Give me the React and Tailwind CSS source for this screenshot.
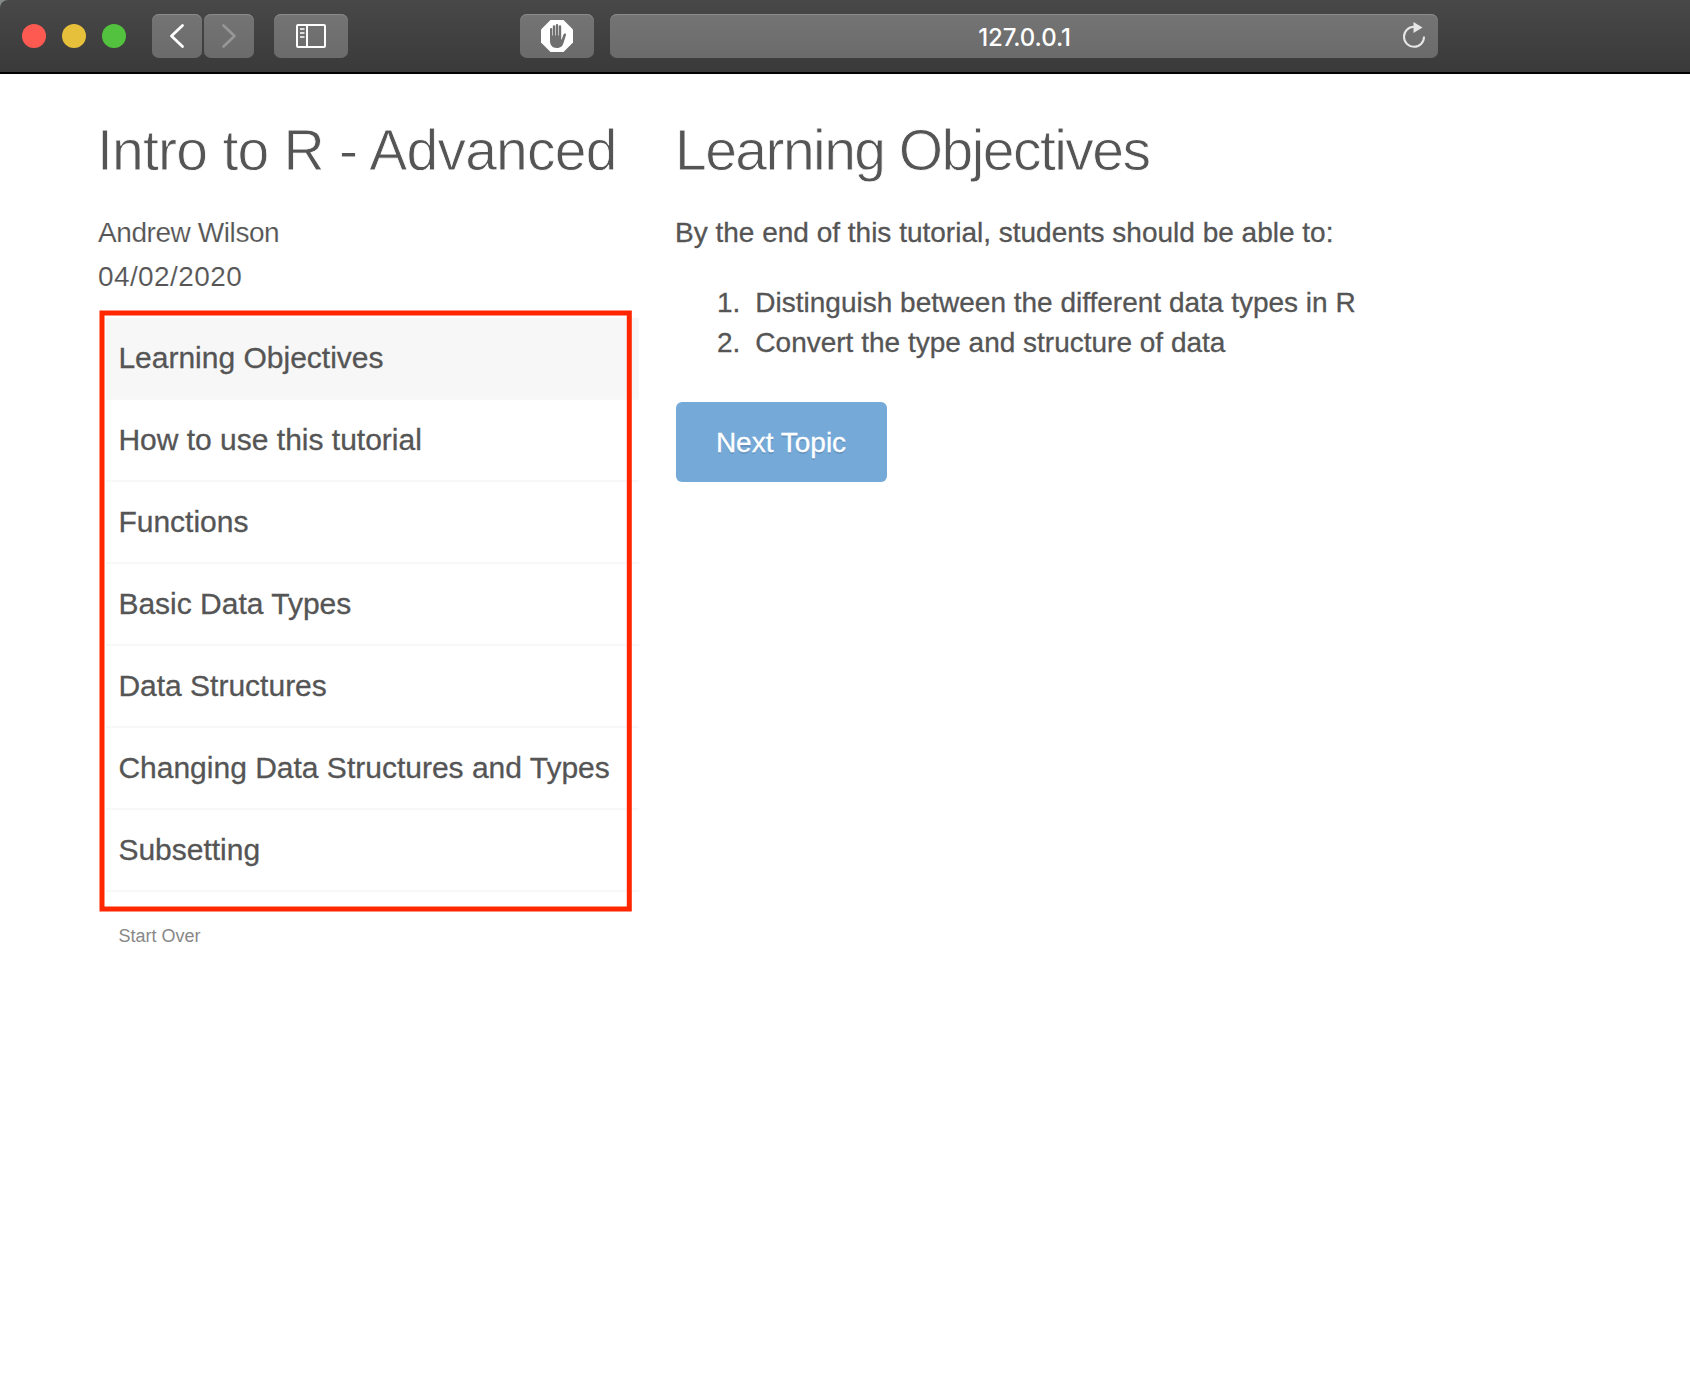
const topics = [
  'Learning Objectives',
  'How to use this tutorial',
  'Functions',
  'Basic Data Types',
  'Data Structures',
  'Changing Data Structures and Types',
  'Subsetting',
];

const objectives = [
  'Distinguish between the different data types in R',
  'Convert the type and structure of data',
];

const control =
  'flex items-center justify-center h-11 rounded-[7px] bg-gradient-to-b from-[#747474] to-[#6b6b6b] shadow-[inset_0_1px_0_#8a8a8a]';

function Toolbar() {
  return (
    <div className="flex-none bg-[#858a8a]">
      <header className="flex h-[74px] items-start rounded-tl-[8px] border-b-2 border-black bg-gradient-to-b from-[#484848] to-[#3a3a3a] pl-[22px] pt-3.5">
        <div className="flex h-11 items-center gap-4">
          <span className="size-6 rounded-full bg-[#ff5a52]" />
          <span className="size-6 rounded-full bg-[#e6c03b]" />
          <span className="size-6 rounded-full bg-[#53c33f]" />
        </div>
        <div className="ml-[26px] flex gap-0.5">
          <button className={control + ' w-[50px]'}>
            <svg width="50" height="44" fill="none" stroke="#fff" strokeWidth="2.8" strokeLinecap="round" strokeLinejoin="round">
              <path d="M30.5 11.5 19.5 22l11 10.5" />
            </svg>
          </button>
          <button className={control + ' w-[50px]'}>
            <svg width="50" height="44" fill="none" stroke="#979797" strokeWidth="2.6" strokeLinecap="round" strokeLinejoin="round">
              <path d="M19.500 11.500 30.500 22l-11 10.500" />
            </svg>
          </button>
        </div>
        <button className={control + ' ml-5 w-[74px]'}>
          <svg width="74" height="44" fill="none">
            <rect x="23" y="11" width="28" height="22" rx="1" stroke="#fff" strokeWidth="2" />
            <path d="M33 11v22" stroke="#fff" strokeWidth="2" />
            <path d="M26 15h4.500M26 19h4.500M26 23h4.500" stroke="#dcdcdc" strokeWidth="2" />
          </svg>
        </button>
        <button className={control + ' ml-[172px] w-[74px]'}>
          <svg width="74" height="44">
            <path d="M30.500 6h13L53 15.500v13L43.500 38h-13L21 28.500v-13z" fill="#fff" />
            <path
              d="M30 15a1.100 1.100 0 0 1 2.200 0v6.500h.6v-9a1.200 1.200 0 0 1 2.400 0v9h.6v-10.200a1.200 1.200 0 0 1 2.400 0v10.200h.6v-9a1.200 1.200 0 0 1 2.400 0V25.500h.5l1.600-4.400c.5-1.200 1.100-1.600 1.900-1.500.8.200 1 .8.700 1.700L43.800 28c-.9 3.800-2.800 6-7 6-4.300 0-6.800-2.800-6.800-7z"
              fill="#6f6f6f"
            />
          </svg>
        </button>
        <div className={control + ' relative ml-4 w-[828px]'}>
          <span className="mt-[3px] ml-px font-['Inter'] text-[24px] font-medium leading-none tracking-[-0.1px] text-white">127.0.0.1</span>
          <svg className="absolute right-[11px] top-[7px]" width="26" height="30" fill="none">
            <path d="M13 5.800A10 10 0 1 0 23 15.500" stroke="#e6e6e6" strokeWidth="2" />
            <path d="M12.500 1v11l9-5.500z" fill="#e6e6e6" />
          </svg>
        </div>
      </header>
    </div>
  );
}

function Sidebar() {
  return (
    <aside className="w-[541px] flex-none">
      <h2 className="-ml-px whitespace-nowrap text-[57px] leading-[64px] tracking-[-0.75px] [-webkit-text-stroke:0.8px_white]">
        Intro to R - Advanced
      </h2>
      <div className="mt-[29px] text-[28px] leading-[44px] [-webkit-text-stroke:0.15px_white]">
        <p className="tracking-[-0.42px]">Andrew Wilson</p>
        <p className="tracking-[0.4px]">04/02/2020</p>
      </div>
      <div className="relative mt-[19px]">
        <nav className="ml-2">
          {topics.map((topic, i) => (
            <a
              key={topic}
              className={
                'block h-[82px] whitespace-nowrap border-b-2 border-[#f8f8f8] pl-[12.4px] text-[30px] leading-[80px] [-webkit-text-stroke:0.3px_#555] ' +
                (i === 0 ? 'bg-[#f7f7f7]' : '')
              }
            >
              {topic}
            </a>
          ))}
        </nav>
        <svg className="absolute left-0 top-[-10px]" width="541" height="606" fill="none">
          <rect x="4" y="5" width="527.300" height="596" stroke="#ff2600" strokeWidth="5" />
        </svg>
      </div>
      <p className="ml-[20.4px] mt-[31px] text-[18px] leading-[26px] text-[#888]">Start Over</p>
    </aside>
  );
}

function Topic() {
  return (
    <main className="ml-9 text-[28px] leading-10">
      <h2 className="whitespace-nowrap text-[57px] leading-[64px] tracking-[-1.55px] [-webkit-text-stroke:0.8px_white]">
        Learning Objectives
      </h2>
      <div className="[-webkit-text-stroke:0.3px_#555]">
        <p className="mt-[31px]">By the end of this tutorial, students should be able to:</p>
        <ol className="mt-[30px] pl-[42px]">
          {objectives.map((text, i) => (
            <li key={text} className="flex gap-[15px]">
              <span>{i + 1}.</span>
              <span>{text}</span>
            </li>
          ))}
        </ol>
      </div>
      <button className="ml-px mt-[39px] block h-20 w-[211px] rounded-md bg-[#74a9d8] pr-px pt-px text-center leading-[80px] text-white [-webkit-text-stroke:0.3px_white] [text-shadow:0_2px_0_rgba(0,0,0,0.12)]">
        Next Topic
      </button>
    </main>
  );
}

export default function App() {
  return (
    <div className="flex h-[1392px] w-[1690px] flex-col overflow-hidden bg-white font-['Liberation_Sans',Arial,sans-serif] text-[#555]">
      <Toolbar />
      <div className="flex pl-[98px] pt-11">
        <Sidebar />
        <Topic />
      </div>
    </div>
  );
}
